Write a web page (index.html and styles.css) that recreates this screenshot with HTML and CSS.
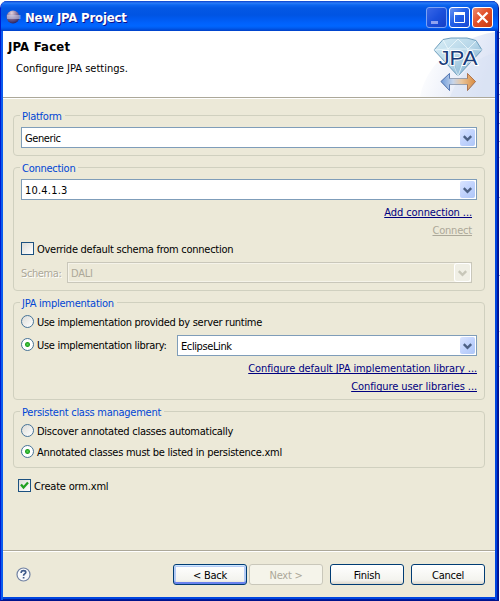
FILE: index.html
```html
<!DOCTYPE html>
<html lang="en">
<head>
<meta charset="utf-8">
<title>New JPA Project</title>
<link rel="stylesheet" href="styles.css">
</head>
<body>
<svg width="0" height="0" class="defs" aria-hidden="true">
  <symbol id="chevron" viewBox="0 0 15 17"><path d="M3.8 7.2 L7.5 10.8 L11.2 7.2" fill="none" stroke="currentColor" stroke-width="2.4"/></symbol>
</svg>
<div class="window">
  <div class="titlebar">
    <svg class="app-icon" width="15" height="14" viewBox="0 0 15 14">
      <defs><radialGradient id="ball" cx=".4" cy=".2" r=".85"><stop offset="0" stop-color="#e4d3dc"/><stop offset=".45" stop-color="#8a749c"/><stop offset="1" stop-color="#211a58"/></radialGradient></defs>
      <circle cx="7" cy="7" r="6.5" fill="url(#ball)"/>
      <path d="M1 6H14.500M1 8H14.500" stroke="#d5dcf5" stroke-width="1"/>
    </svg>
    <span class="title">New JPA Project</span>
    <div class="controls">
      <span class="ctl ctl-min"><svg width="19" height="19"><path d="M4 14.5H11" stroke="#8fa3f0" stroke-width="3"/></svg></span>
      <span class="ctl"><svg width="19" height="19"><path d="M4.500 4.500H14.500V14.500H4.500Z" fill="none" stroke="#fff"/><path d="M4 5.500H15" stroke="#fff" stroke-width="3"/></svg></span>
      <span class="ctl ctl-close"><svg width="19" height="19"><path d="M4.5 4.5L14.5 14.5M14.5 4.5L4.5 14.5" stroke="#fff" stroke-width="2.3"/></svg></span>
    </div>
  </div>
  <header class="banner">
    <div>
      <h1>JPA Facet</h1>
      <p>Configure JPA settings.</p>
    </div>
    <svg class="banner-art" width="75" height="66" viewBox="0 0 75 66">
      <defs>
        <linearGradient id="haze" x1="0" y1="0" x2="1" y2=".3"><stop offset=".15" stop-color="#fff"/><stop offset="1" stop-color="#dde4f5"/></linearGradient>
        <linearGradient id="gem" x1="0" y1="0" x2="1" y2="1"><stop offset="0" stop-color="#d9eef6"/><stop offset=".5" stop-color="#b6d6e8"/><stop offset="1" stop-color="#6fa4c9"/></linearGradient>
        <linearGradient id="arrow"><stop offset="0" stop-color="#6e9cdb"/><stop offset=".35" stop-color="#c7d5ea"/><stop offset=".6" stop-color="#e9c59c"/><stop offset="1" stop-color="#d98a3d"/></linearGradient>
      </defs>
      <path d="M0 66C4 40 30 8 75 1V66Z" fill="url(#haze)"/>
      <path d="M30 66C40 40 58 26 75 22V66Z" fill="#d8e1f4" opacity=".5"/>
      <path d="M23 8.500L31 7H47L56 9.500L62 19L38 45L14 19Z" fill="url(#gem)" stroke="#6f9fbd"/>
      <path d="M23 9L28 18L38 45L48 18L56 10M14 19L28 18L38 8L48 18L62 19M28 18H48" fill="none" stroke="#f5fcff" stroke-width=".7"/>
      <path d="M28 18L38 45L33 25Z" fill="#7aaaca" opacity=".5"/>
      <text x="18.500" y="34" class="logo-text" textLength="39" lengthAdjust="spacingAndGlyphs">JPA</text>
      <path d="M21 50.500L29.500 42.500V47.500H47.500V42.500L55.500 50.500L47.500 59.500V53.500H29.500V59.500Z" fill="url(#arrow)" stroke="#8492a8" stroke-width=".8"/>
      <path d="M47.500 47.500V42.500L55.500 50.500L47.500 59.500V53.500" fill="none" stroke="#b66c38" stroke-width=".8"/>
      <path d="M29.500 47.500V42.500L21 50.500L29.500 59.500V53.500" fill="none" stroke="#4771b8" stroke-width=".8"/>
    </svg>
  </header>
  <main>
    <section class="group g-platform">
      <h2>Platform</h2>
      <div class="combo"><span class="tight">Generic</span><i class="drop"><svg width="15" height="17"><use href="#chevron"/></svg></i></div>
    </section>
    <section class="group g-connection">
      <h2>Connection</h2>
      <div class="combo"><span class="address">10.4.1.3</span><i class="drop"><svg width="15" height="17"><use href="#chevron"/></svg></i></div>
      <div class="links inset"><a>Add connection ...</a><a class="off">Connect</a></div>
      <div class="row r-override"><i class="check"></i><span>Override default schema from connection</span></div>
      <div class="row r-schema"><span class="label-off tight">Schema:</span><div class="combo combo-off"><span>DALI</span><i class="drop"><svg width="15" height="17"><use href="#chevron"/></svg></i></div></div>
    </section>
    <section class="group g-impl">
      <h2>JPA implementation</h2>
      <div class="row r-server"><i class="radio"></i><span>Use implementation provided by server runtime</span></div>
      <div class="row r-library"><i class="radio on"></i><span>Use implementation library:</span><div class="combo"><span class="tight">EclipseLink</span><i class="drop"><svg width="15" height="17"><use href="#chevron"/></svg></i></div></div>
      <div class="links"><a>Configure default JPA implementation library ...</a><a>Configure user libraries ...</a></div>
    </section>
    <section class="group g-class">
      <h2>Persistent class management</h2>
      <div class="row r-discover"><i class="radio"></i><span>Discover annotated classes automatically</span></div>
      <div class="row r-listed"><i class="radio on"></i><span>Annotated classes must be listed in persistence.xml</span></div>
    </section>
    <div class="row r-orm"><i class="check"><svg width="11" height="11"><path d="M2 4.500L4.500 7.500L9 2.500" fill="none" stroke="#21a121" stroke-width="2.300"/></svg></i><span>Create orm.xml</span></div>
  </main>
  <footer>
    <svg class="help" width="15" height="15" viewBox="0 0 15 15"><circle cx="7.500" cy="7.500" r="6.500" fill="#f8f9fb" stroke="#7182a3" stroke-width="1.200"/><path d="M5.200 6V5.200Q5.400 3.700 7.500 3.700Q9.800 3.700 9.800 5.300Q9.800 6.300 8.500 7Q7.600 7.500 7.600 8.700M7.600 10V11.500" fill="none" stroke="#405b8b" stroke-width="1.700"/></svg>
    <span class="btn btn-default">&lt; Back</span>
    <span class="btn btn-off">Next &gt;</span>
    <span class="btn">Finish</span>
    <span class="btn">Cancel</span>
  </footer>
</div>
</body>
</html>
```
FILE: styles.css
```css
* { box-sizing: border-box; }
body {
  margin: 0;
  background: #fff;
  color: #000;
  font: 11px/14px "DejaVu Sans Condensed", "DejaVu Sans", sans-serif;
  font-stretch: condensed;
  letter-spacing: -0.26px;
  overflow: hidden;
}
/* marks of the desktop behind the window's right edge */
html {
  background: #fff;
}
body {
  background: linear-gradient(#fff 32px, #8fa0d8 32px 33px, #fff 33px 38px, #8fa0d8 38px 39px, #fff 39px 83px, #8fa0d8 83px 84px, #fff 84px 94px, #8fa0d8 94px 95px, #fff 95px 112px, #8fa0d8 112px 113px, #fff 113px 123px, #8fa0d8 123px 124px, #fff 124px 141px, #8fa0d8 141px 142px, #fff 142px 157px, #c5cdea 157px 158px, #fff 158px 197px, #8fa0d8 197px 198px, #fff 198px 275px, #8fa0d8 275px 276px, #fff 276px 331px, #c5cdea 331px 332px, #fff 332px 366px, #c5cdea 366px 367px, #fff 367px) 499px 0 / 1px 601px no-repeat;
  height: 601px;
  padding-top: 1px;
}
.defs { display: block; }
h1, h2, p { margin: 0; font-size: inherit; font-weight: normal; }
span, a, h2 { white-space: nowrap; }
.tight { letter-spacing: -0.4px; }
.address { letter-spacing: 0.2px; }
.window {
  width: 499px;
  height: 600px;
  display: flex;
  flex-direction: column;
  border: 1px solid #0019cf;
  border-width: 0 1px 1px;
  border-right-color: #00138c;
  border-bottom-color: #00138c;
  border-radius: 7px 7px 0 0;
  background: #ece9d8;
  box-shadow: inset 2px 0 #0a5bee, inset -1px 0 #0019a0, inset -3px 0 #0046e0, inset 0 -1px #0019a0, inset 0 -3px #0046e0;
  overflow: hidden;
}
.titlebar {
  flex: none;
  height: 30px;
  display: flex;
  align-items: center;
  padding: 3px 5px 0;
  background: linear-gradient(#0a3fc9 0, #2a7cf8 2px, #0c66f0 4px, #0458e4 7px, #0054e3 14px, #0061fc 22px, #0066ff 25px, #005cf0 27px, #0040c8 30px);
}
.app-icon { margin: -2px 4px 0 0; }
.title {
  flex: 1;
  color: #fff;
  font-size: 13px;
  font-weight: bold;
  letter-spacing: -0.17px;
  text-shadow: 1px 1px #0f1089;
}
.controls { display: flex; gap: 2px; }
.ctl {
  width: 21px;
  height: 21px;
  border: 1px solid #fff;
  border-radius: 3px;
  background: linear-gradient(135deg, #6c94f2, #2260e8 45%, #1847d2);
}
.ctl svg { display: block; }
.ctl-min { border-color: #7da2f3; background: linear-gradient(135deg, #3967e7, #1b50dc 50%, #163fc5); }
.ctl-close { background: linear-gradient(135deg, #ee8c70, #e2502a 45%, #c63a12); }
.banner {
  flex: none;
  height: 68px;
  margin: 0 3px 0 2px;
  display: flex;
  justify-content: space-between;
  background: #fff;
  border-bottom: 1px solid #fff;
  box-shadow: inset 0 -1px #aca899;
}
.banner h1 { margin: 8px 0 0 5px; font-size: 13px; line-height: 15px; font-weight: bold; letter-spacing: 0.2px; }
.banner p { margin: 8px 0 0 13px; letter-spacing: 0; }
.banner-art { width: 75px; height: 66px; }
.logo-text {
  font: 21px "Liberation Sans", sans-serif;
  letter-spacing: 0;
  fill: #183c7a;
  stroke: #fff;
  stroke-width: 2;
  paint-order: stroke;
}
main { flex: 1; padding: 16px 13px 0 12px; }
.group { border: 1px solid #d0d0bf; border-radius: 4px; padding: 0 7px; }
.group h2 { width: fit-content; height: 14px; margin: -7px 0 4px -1px; padding: 1px 3px 0 2px; background: #ece9d8; color: #0046d5; }
.g-platform { height: 41px; margin-bottom: 11px; }
.g-connection { height: 124px; margin-bottom: 11px; }
.g-impl { height: 98px; margin-bottom: 11px; }
.g-class { height: 57px; }
.combo {
  height: 21px;
  display: flex;
  align-items: center;
  justify-content: space-between;
  padding: 0 1px 0 3px;
  border: 1px solid #7f9db9;
  background: #fff;
}
.combo span { padding-top: 3px; }
.drop {
  width: 15px;
  height: 17px;
  border-radius: 2px;
  color: #4d6185;
  background: linear-gradient(135deg, #dbe5ff, #c1d3fd 50%, #aec6f7);
}
.drop svg { display: block; }
.combo-off { border-color: #c9c7ba; background: #ece9d8; color: #aca899; box-shadow: inset 0 0 0 1px #f5f3e9; }
.combo-off .drop { background: #f0efe5; color: #c8c7b9; box-shadow: 0 0 0 1px #fff; }
.links { display: flex; flex-direction: column; align-items: flex-end; gap: 4px; letter-spacing: -0.09px; }
.links a { color: #000080; text-decoration: underline; text-decoration-skip-ink: none; text-underline-offset: 1px; }
.links .off { color: #aca899; letter-spacing: -0.2px; }
.inset { padding: 6px 5px 0 0; }
.row { height: 13px; display: flex; align-items: flex-start; }
.row > span { padding-top: 1px; line-height: 13px; }
.check, .radio { flex: none; width: 13px; height: 13px; margin-right: 3px; background: linear-gradient(135deg, #dcdcd7, #fff); }
.check { border: 1px solid #1c5180; }
.check svg { display: block; }
.radio { border: 1px solid #467397; border-radius: 50%; }
.radio.on { background: radial-gradient(circle, #55d551 0, #21a121 2px, #fff 3px); }
.r-override { margin-top: 4px; }
.r-schema { height: 21px; margin: 7px 5px 0 0; }
.r-schema > .label-off { width: 46px; padding-top: 5px; color: #aca899; text-shadow: 1px 1px #fff; }
.r-schema .combo { flex: 1; }
.r-server { margin-top: 5px; letter-spacing: -0.3px; }
.r-library { margin-top: 10px; letter-spacing: -0.3px; }
.r-library .combo { width: 300px; margin: -3px 0 0 auto; }
.g-impl .links { padding-top: 11px; }
.r-discover { margin-top: 5px; }
.r-listed { margin-top: 8px; }
.r-orm { margin: 11px 0 0 5px; letter-spacing: -0.18px; }
footer {
  flex: none;
  height: 50px;
  margin: 0 3px 0 2px;
  display: flex;
  align-items: flex-start;
  padding: 13px 10px 0 13px;
  border-top: 1px solid #aca899;
  box-shadow: inset 0 1px #fff;
}
.help { margin: 3px auto 0 0; }
.btn {
  width: 74px;
  height: 21px;
  margin-left: 7px;
  border: 1px solid #003c74;
  border-radius: 3px;
  background: linear-gradient(#fff, #f3f3ee 80%, #dcd7cb);
  text-align: center;
  line-height: 21px;
}
.btn-default { box-shadow: inset 0 1px #cee7ff, inset 0 -2px #6982ee, inset 0 0 0 2px #b4cbf5; }
.btn-off { margin-left: 2px; border-color: #c9c7ba; background: #f5f4ea; color: #aca899; }
```
